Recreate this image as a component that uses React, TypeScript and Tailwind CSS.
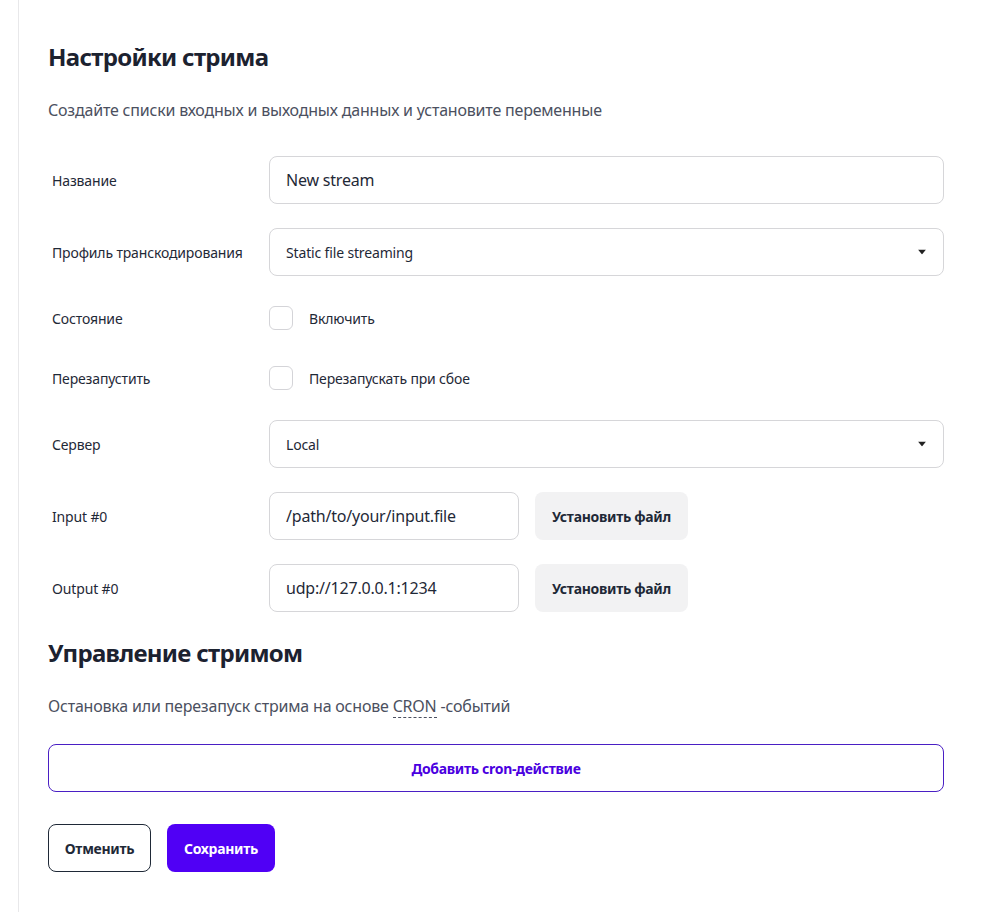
import React from "react";

const font = { fontFamily: '"Noto Sans", "Open Sans", sans-serif' };

function Label({ children }: { children: React.ReactNode }) {
  return <div className="w-[221px] shrink-0 pl-1 text-[14px] tracking-[-0.15px] text-[#1f2937]">{children}</div>;
}

function Caret() {
  return (
    <svg width="8" height="5" viewBox="0 0 8 5" className="absolute right-[17px] top-1/2 -translate-y-1/2">
      <path d="M0 0 L8 0 L4 5 Z" fill="#222" />
    </svg>
  );
}

function Checkbox({ label }: { label: string }) {
  return (
    <div className="flex items-center">
      <div className="w-6 h-6 rounded-md border border-[#d4d4d8] bg-white" />
      <span className="ml-4 text-[14px] tracking-[-0.15px] text-[#1f2937]">{label}</span>
    </div>
  );
}

export default function App() {
  return (
    <div className="min-h-[912px] bg-white pl-[18px]" style={font}>
      <div className="min-h-[912px] border-l border-[#e8e8ea] pl-[29px] pr-[48px] pt-[41px]">
        <h1 className="text-[24px] leading-[32px] font-bold tracking-[-0.7px] text-[#1c2230]">Настройки стрима</h1>
        <p className="mt-[25px] text-[16px] leading-6 tracking-[-0.2px] text-[#4b5060]">
          Создайте списки входных и выходных данных и установите переменные
        </p>

        <div className="mt-[34px] flex flex-col gap-6">
          <div className="flex items-center">
            <Label>Название</Label>
            <div className="flex-1 h-12 rounded-lg border border-[#d6d6d9] flex items-center px-4 text-[16px] tracking-[-0.2px] text-[#1f2937]">
              New stream
            </div>
          </div>
          <div className="flex items-center">
            <Label>Профиль транскодирования</Label>
            <div className="relative flex-1 h-12 rounded-lg border border-[#d6d6d9] flex items-center px-4 text-[14px] tracking-[-0.15px] text-[#1f2937]">
              Static file streaming
              <Caret />
            </div>
          </div>
          <div className="flex items-center h-9">
            <Label>Состояние</Label>
            <Checkbox label="Включить" />
          </div>
          <div className="flex items-center h-9">
            <Label>Перезапустить</Label>
            <Checkbox label="Перезапускать при сбое" />
          </div>
          <div className="flex items-center">
            <Label>Сервер</Label>
            <div className="relative flex-1 h-12 rounded-lg border border-[#d6d6d9] flex items-center px-4 text-[14px] tracking-[-0.15px] text-[#1f2937]">
              Local
              <Caret />
            </div>
          </div>
          <div className="flex items-center">
            <Label>Input #0</Label>
            <div className="w-[250px] h-12 rounded-lg border border-[#d6d6d9] flex items-center px-4 text-[16px] tracking-[-0.2px] text-[#1f2937]">
              /path/to/your/input.file
            </div>
            <button className="ml-4 h-12 w-[153px] rounded-lg bg-[#f2f2f3] text-[14px] font-bold tracking-[-0.3px] text-[#1f2937]">
              Установить файл
            </button>
          </div>
          <div className="flex items-center">
            <Label>Output #0</Label>
            <div className="w-[250px] h-12 rounded-lg border border-[#d6d6d9] flex items-center px-4 text-[16px] tracking-[-0.2px] text-[#1f2937]">
              udp://127.0.0.1:1234
            </div>
            <button className="ml-4 h-12 w-[153px] rounded-lg bg-[#f2f2f3] text-[14px] font-bold tracking-[-0.3px] text-[#1f2937]">
              Установить файл
            </button>
          </div>
        </div>

        <h2 className="mt-[25px] text-[24px] leading-[32px] font-bold tracking-[-0.7px] text-[#1c2230]">Управление стримом</h2>
        <p className="mt-[25px] text-[16px] leading-6 tracking-[-0.2px] text-[#4b5060]">
          Остановка или перезапуск стрима на основе{" "}
          <abbr className="no-underline border-b border-dashed border-[#4b5060]">CRON</abbr> -событий
        </p>

        <button className="mt-[26px] w-full h-12 rounded-lg border border-[#4a1fc4] text-[14px] font-bold tracking-[-0.3px] text-[#4a00e0]">
          Добавить cron-действие
        </button>

        <div className="mt-8 flex gap-4">
          <button className="h-12 w-[103px] rounded-lg border border-[#1f2937] text-[14px] font-bold tracking-[-0.3px] text-[#1f2937]">
            Отменить
          </button>
          <button className="h-12 w-[108px] rounded-lg bg-[#5000f5] text-[14px] font-bold tracking-[-0.3px] text-white">
            Сохранить
          </button>
        </div>
      </div>
    </div>
  );
}
